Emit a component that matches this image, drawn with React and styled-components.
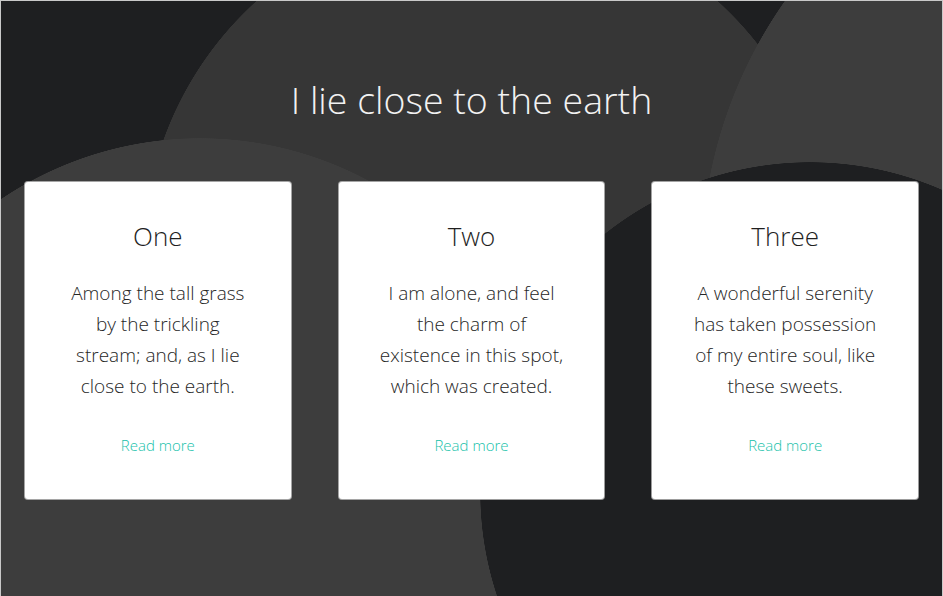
import React from "react";
import styled, { createGlobalStyle } from "styled-components";

const cards = [
  {
    title: "One",
    text: "Among the tall grass by the trickling stream; and, as I lie close to the earth.",
  },
  {
    title: "Two",
    text: "I am alone, and feel the charm of existence in this spot, which was created.",
  },
  {
    title: "Three",
    text: "A wonderful serenity has taken possession of my entire soul, like these sweets.",
  },
];

function App() {
  return (
    <>
      <GlobalStyle />
      <Page>
        <Title>I lie close to the earth</Title>
        <CardRow>
          {cards.map((card) => (
            <Card key={card.title}>
              <CardTitle>{card.title}</CardTitle>
              <CardText>{card.text}</CardText>
              <ReadMore href="#">Read more</ReadMore>
            </Card>
          ))}
        </CardRow>
      </Page>
    </>
  );
}

const GlobalStyle = createGlobalStyle`
  html, body {
    margin: 0;
    padding: 0;
    background: #1e1f21;
  }
  body {
    font-family: "Open Sans", "Noto Sans", sans-serif;
    font-weight: 300;
  }
`;

// circles are layered background gradients, first one sits on top
const Page = styled.div`
  box-sizing: border-box;
  height: 600px;
  border: 1px solid #c9c9c9;
  overflow: hidden;
  padding: 73px 24px 0;
  background-color: #1e1f21;
  background-image:
    radial-gradient(circle 330px at 809px 491px, #1e1f21 329.5px, transparent 330px),
    radial-gradient(circle 459px at 1159px 264px, #3d3d3d 458.5px, transparent 459px),
    radial-gradient(circle 356px at 199px 493px, #3d3d3d 355.5px, transparent 356px),
    radial-gradient(circle 344px at 486px 255px, #363636 343.5px, transparent 344px);
`;

const Title = styled.h1`
  margin: 0 0 56px;
  text-align: center;
  font-size: 37.5px;
  font-weight: 300;
  line-height: 52px;
  color: #f2f2f2;
`;

const CardRow = styled.div`
  display: grid;
  grid-template-columns: repeat(3, 1fr);
  gap: 48px;
`;

const Card = styled.div`
  height: 317px;
  box-sizing: border-box;
  padding: 36px 20px 0;
  background: #fff;
  border-radius: 3px;
  box-shadow: 0 0 0 1px rgba(210, 210, 210, 0.7);
  display: flex;
  flex-direction: column;
  align-items: center;
  text-align: center;
`;

const CardTitle = styled.h2`
  margin: 0 0 24px;
  font-size: 26px;
  font-weight: 300;
  line-height: 36px;
  color: #1f1f1f;
`;

const CardText = styled.p`
  margin: 0 0 33px;
  width: 188px;
  font-size: 19px;
  line-height: 31px;
  color: #262626;
`;

const ReadMore = styled.a`
  font-size: 15px;
  line-height: 20px;
  color: #17c1aa;
  text-decoration: none;
`;

export default App;
